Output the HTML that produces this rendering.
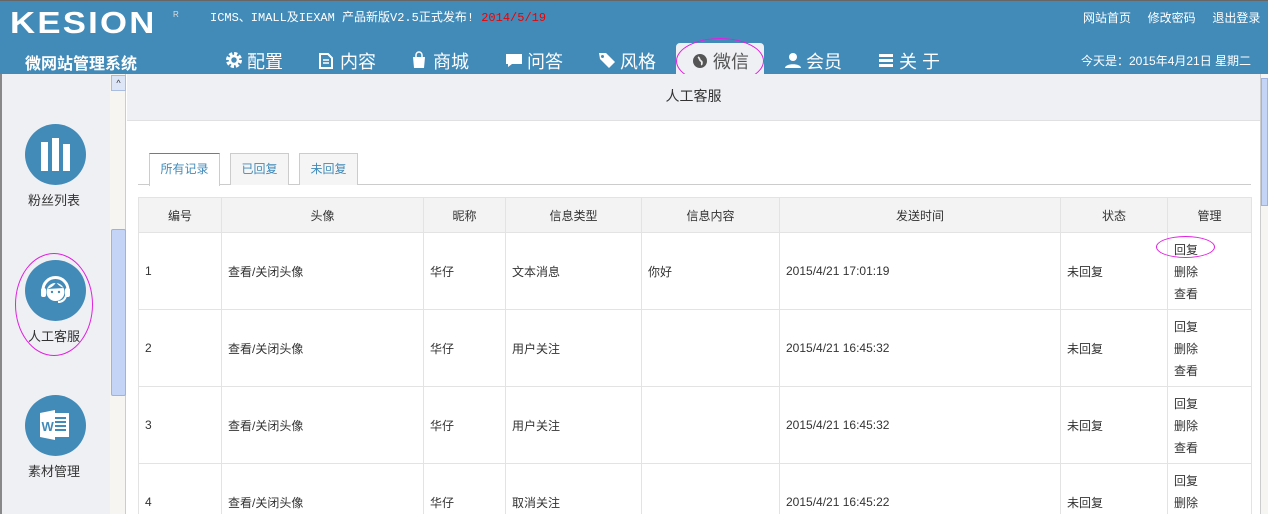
<!DOCTYPE html>
<html style="overflow:hidden;width:1268px;height:514px"><head><meta charset="utf-8"><style>
*{margin:0;padding:0;box-sizing:border-box}
body{width:1268px;height:514px;overflow:hidden;font-family:"Liberation Sans","Noto Sans CJK SC",sans-serif;font-size:12px;color:#333;background:#fff;position:relative}
.a{position:absolute}
#hd{left:0;top:0;width:1268px;height:74px;background:#428bb9;border-top:1px solid #666}
.nav{position:absolute;top:47px;font-size:18px;color:#fff;white-space:nowrap}
.nav svg{position:absolute;left:-22px;top:3px}
th,td{border:1px solid #e3e3e3}
table{border-collapse:collapse;position:absolute;left:138px;top:197px;width:1113px;table-layout:fixed;font-size:12px}
th{background:#f3f3f3;height:35px;font-weight:normal;color:#333}
td{height:77px;padding-left:6px;color:#333}
td.m{line-height:22px;padding-top:2px}
</style></head><body>
<div id="hd" class="a">
 <div class="a" style="left:10px;top:4px;font-size:31px;font-weight:bold;color:#fff;letter-spacing:2px;transform:scaleX(1.12);transform-origin:left">KESION</div>
 <div class="a" style="left:173px;top:9px;font-size:8px;color:#ddd">R</div>
 <div class="a" style="left:210px;top:7px;font-family:'Liberation Mono','Noto Sans CJK SC',monospace;font-size:12px;color:#fff">ICMS、IMALL及IEXAM 产品新版V2.5正式发布! <span style="color:#e00">2014/5/19</span></div>
 <div class="a" style="left:1083px;top:8px;color:#fff;font-size:12px;word-spacing:0">网站首页&nbsp;&nbsp;&nbsp;&nbsp;&nbsp;修改密码&nbsp;&nbsp;&nbsp;&nbsp;&nbsp;退出登录</div>
 <div class="a" style="left:25px;top:49px;color:#fff;font-size:16px;font-weight:bold">微网站管理系统</div>
 <div class="a" style="left:676px;top:42px;width:88px;height:32px;background:#eff0f4;border-radius:4px 4px 0 0"></div>
 <div class="a" style="left:676px;top:37px;width:88px;height:46px;border:1px solid #e020e0;border-radius:50%"></div>
 <div class="nav" style="left:247px"><svg width="18" height="18" viewBox="0 0 18 18"><circle cx="9" cy="9" r="6" fill="none" stroke="#fff" stroke-width="4" stroke-dasharray="3 1.7"/><circle cx="9" cy="9" r="4" fill="none" stroke="#fff" stroke-width="2.5"/></svg>配置</div>
 <div class="nav" style="left:340px"><svg width="16" height="18" viewBox="0 0 16 18"><path d="M2 3h8l4 4v10H2z" fill="none" stroke="#fff" stroke-width="2"/><path d="M5 9h6M5 12h6" stroke="#fff" stroke-width="1.5"/></svg>内容</div>
 <div class="nav" style="left:433px"><svg width="16" height="18" viewBox="0 0 16 18"><path d="M2 6h12l-1 11H3z" fill="#fff"/><path d="M5 6V4a3 3 0 0 1 6 0v2" fill="none" stroke="#fff" stroke-width="1.5"/></svg>商城</div>
 <div class="nav" style="left:527px"><svg width="18" height="18" viewBox="0 0 18 18"><path d="M1 3h16v10H7l-4 3v-3H1z" fill="#fff"/></svg>问答</div>
 <div class="nav" style="left:620px"><svg width="18" height="18" viewBox="0 0 18 18"><path d="M1 2h7l9 9-6 6-9-9z" fill="#fff"/><circle cx="4.5" cy="5.5" r="1.5" fill="#428bb9"/></svg>风格</div>
 <div class="nav" style="left:713px;color:#555"><svg width="18" height="18" viewBox="0 0 18 18"><circle cx="9" cy="10" r="7" fill="#555"/><path d="M7 6c2 1 1 3 3 4s0 3 1 4" stroke="#eee" stroke-width="1.8" fill="none"/></svg>微信</div>
 <div class="nav" style="left:806px"><svg width="18" height="18" viewBox="0 0 18 18"><circle cx="9" cy="6" r="4" fill="#fff"/><path d="M1 17c0-5 16-5 16 0z" fill="#fff"/></svg>会员</div>
 <div class="nav" style="left:899px"><svg width="18" height="18" viewBox="0 0 18 18"><path d="M2 3h14v3H2zM2 8h14v3H2zM2 13h14v3H2z" fill="#fff"/></svg>关 于</div>
 <div class="a" style="left:1081px;top:51px;color:#fff;font-size:12px">今天是：2015年4月21日 星期二</div>
</div>
<div class="a" style="left:0;top:74px;width:2px;height:440px;background:#888"></div>
<div class="a" style="left:2px;top:74px;width:108px;height:440px;background:#eff0f4"></div>
<div class="a" style="left:110px;top:74px;width:16px;height:440px;background:#f6f5f1;border-right:1px solid #ccc"></div>
<div class="a" style="left:111px;top:75px;width:15px;height:16px;background:#dde6f7;border:1px solid #a9bde0;font-size:9px;color:#333;text-align:center;line-height:14px">^</div>
<div class="a" style="left:111px;top:229px;width:15px;height:167px;background:#c4d4f6;border:1px solid #9db2e0;border-radius:2px"></div>
<div class="a" style="left:25px;top:124px;width:61px;height:61px;border-radius:50%;background:#428bb9"></div>
<div class="a" style="left:41px;top:142px;width:7px;height:29px;background:#fff"></div>
<div class="a" style="left:52px;top:138px;width:7px;height:33px;background:#fff"></div>
<div class="a" style="left:63px;top:144px;width:7px;height:27px;background:#fff"></div>
<div class="a" style="left:28px;top:190px;font-size:13px;color:#333">粉丝列表</div>
<div class="a" style="left:25px;top:260px;width:61px;height:61px;border-radius:50%;background:#428bb9"></div>
<svg class="a" style="left:37px;top:272px" width="37" height="37" viewBox="0 0 37 37"><path d="M6 18a12.5 12.5 0 0 1 25 0" fill="none" stroke="#fff" stroke-width="3"/><rect x="4" y="16" width="5" height="9" rx="2" fill="#fff"/><rect x="28" y="16" width="5" height="9" rx="2" fill="#fff"/><circle cx="18.5" cy="20" r="9" fill="#fff"/><path d="M10 17c4-1 8-4 9-7 2 3 5 5 8 6" fill="#428bb9"/><circle cx="15" cy="20" r="1.2" fill="#428bb9"/><circle cx="22" cy="20" r="1.2" fill="#428bb9"/><path d="M29 24q-2 6-8 6" fill="none" stroke="#fff" stroke-width="2"/></svg>
<div class="a" style="left:15px;top:253px;width:78px;height:103px;border:1px solid #e020e0;border-radius:50%"></div>
<div class="a" style="left:28px;top:326px;font-size:13px;color:#333">人工客服</div>
<div class="a" style="left:25px;top:395px;width:61px;height:61px;border-radius:50%;background:#428bb9"></div>
<svg class="a" style="left:38px;top:408px" width="34" height="34" viewBox="0 0 34 34"><rect x="13" y="5" width="18" height="24" fill="#fff"/><path d="M17 10h11M17 14h11M17 18h11M17 22h11" stroke="#428bb9" stroke-width="2"/><path d="M2 5l15-3v30L2 29z" fill="#fff"/><text x="3.5" y="23" font-size="13" font-weight="bold" fill="#428bb9" font-family="Liberation Sans">W</text></svg>
<div class="a" style="left:28px;top:461px;font-size:13px;color:#333">素材管理</div>
<div class="a" style="left:127px;top:74px;width:1133px;height:47px;background:#eff0f4;border-bottom:1px solid #e0e0e0;text-align:center;line-height:44px;font-size:14px;color:#333">人工客服</div>
<div class="a" style="left:1260px;top:74px;width:8px;height:440px;background:#f6f5f1;border-left:1px solid #ccc"></div>
<div class="a" style="left:1261px;top:78px;width:7px;height:128px;background:#c4d4f6;border:1px solid #9db2e0"></div>
<div class="a" style="left:138px;top:184px;width:1113px;height:1px;background:#ccc"></div>
<div class="a" style="left:149px;top:153px;width:71px;height:33px;background:#fff;border:1px solid #ccc;border-top:1px solid #428bb9;border-bottom:none;color:#428bb9;text-align:center;line-height:31px">所有记录</div>
<div class="a" style="left:230px;top:153px;width:59px;height:32px;background:#f5f5f5;border:1px solid #ccc;border-bottom:none;color:#428bb9;text-align:center;line-height:31px">已回复</div>
<div class="a" style="left:299px;top:153px;width:59px;height:32px;background:#f5f5f5;border:1px solid #ccc;border-bottom:none;color:#428bb9;text-align:center;line-height:31px">未回复</div>
<div class="a" style="left:0;top:0;width:1268px;height:514px;overflow:hidden;pointer-events:none">
<table>
<colgroup><col style="width:83px"><col style="width:202px"><col style="width:82px"><col style="width:136px"><col style="width:138px"><col style="width:281px"><col style="width:107px"><col style="width:84px"></colgroup>
<tr><th>编号</th><th>头像</th><th>昵称</th><th>信息类型</th><th>信息内容</th><th>发送时间</th><th>状态</th><th>管理</th></tr>
<tr><td>1</td><td>查看/关闭头像</td><td>华仔</td><td>文本消息</td><td>你好</td><td>2015/4/21 17:01:19</td><td>未回复</td><td class="m">回复<br>删除<br>查看</td></tr>
<tr><td>2</td><td>查看/关闭头像</td><td>华仔</td><td>用户关注</td><td></td><td>2015/4/21 16:45:32</td><td>未回复</td><td class="m">回复<br>删除<br>查看</td></tr>
<tr><td>3</td><td>查看/关闭头像</td><td>华仔</td><td>用户关注</td><td></td><td>2015/4/21 16:45:32</td><td>未回复</td><td class="m">回复<br>删除<br>查看</td></tr>
<tr><td>4</td><td>查看/关闭头像</td><td>华仔</td><td>取消关注</td><td></td><td>2015/4/21 16:45:22</td><td>未回复</td><td class="m">回复<br>删除<br>查看</td></tr>
</table>
</div>
<div class="a" style="left:1156px;top:236px;width:59px;height:22px;border:1px solid #e020e0;border-radius:50%"></div>
</body></html>
